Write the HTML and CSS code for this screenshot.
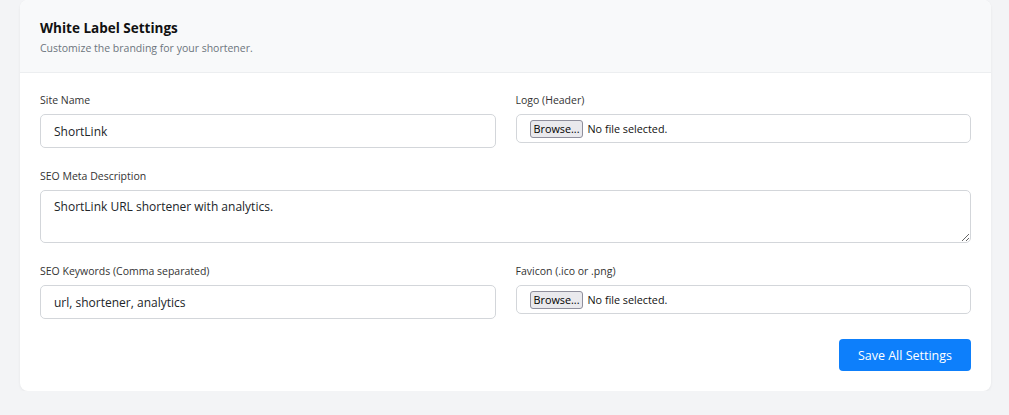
FILE: index.html
```html
<!DOCTYPE html>
<html lang="en">
<head>
    <meta charset="UTF-8">
    <meta name="viewport" content="width=device-width, initial-scale=1.0">
    <title>White Label Settings</title>
    <link rel="stylesheet" href="styles.css">
</head>
<body>
    <div class="page">
        <form class="card">
            <div class="card-header">
                <h2>White Label Settings</h2>
                <p>Customize the branding for your shortener.</p>
            </div>

            <div class="card-body">
                <div class="row">
                    <div class="field">
                        <label for="siteName">Site Name</label>
                        <input type="text" id="siteName" class="text-input" value="ShortLink">
                    </div>
                    <div class="field">
                        <label>Logo (Header)</label>
                        <div class="file-input">
                            <span class="browse">Browse...</span>
                            <span class="file-name">No file selected.</span>
                        </div>
                    </div>
                </div>

                <div class="field">
                    <label for="metaDesc">SEO Meta Description</label>
                    <textarea id="metaDesc" class="text-input" rows="2">ShortLink URL shortener with analytics.</textarea>
                </div>

                <div class="row">
                    <div class="field">
                        <label for="keywords">SEO Keywords (Comma separated)</label>
                        <input type="text" id="keywords" class="text-input" value="url, shortener, analytics">
                    </div>
                    <div class="field">
                        <label>Favicon (.ico or .png)</label>
                        <div class="file-input">
                            <span class="browse">Browse...</span>
                            <span class="file-name">No file selected.</span>
                        </div>
                    </div>
                </div>

                <div class="actions">
                    <button type="button" class="btn-primary">Save All Settings</button>
                </div>
            </div>
        </form>
    </div>
</body>
</html>
```

FILE: styles.css
```css
* {
    box-sizing: border-box;
    font-family: 'Open Sans', 'Noto Sans', sans-serif;
}

body {
    margin: 0;
    background-color: #f3f4f6;
    color: #212529;
}

.page {
    padding: 0 18px 0 20px;
}

.card {
    display: block;
    background-color: #fff;
    border-radius: 8px;
    box-shadow: 0 1px 3px rgba(0, 0, 0, 0.06);
    overflow: hidden;
}

.card-header {
    background-color: #f8f9fa;
    border-bottom: 1px solid #eceef0;
    padding: 18px 20px 16px;
}

.card-header h2 {
    margin: 0;
    font-size: 13.5px;
    line-height: 20px;
    font-weight: 700;
    color: #111;
}

.card-header p {
    margin: 2px 0 0;
    font-size: 10.5px;
    line-height: 16px;
    color: #6c757d;
}

.card-body {
    padding: 19px 20px 20px;
    display: flex;
    flex-direction: column;
    gap: 20px;
}

.row {
    display: grid;
    grid-template-columns: 1fr 1fr;
    gap: 20px;
    align-items: start;
}

.field {
    display: flex;
    flex-direction: column;
}

.field label {
    font-size: 10.5px;
    line-height: 16px;
    margin-bottom: 6px;
    color: #333;
}

.text-input {
    border: 1px solid #d3d6da;
    border-radius: 5px;
    padding: 0 13px;
    height: 34px;
    font-size: 12px;
    color: #212529;
    background: #fff;
    outline: none;
}

textarea.text-input {
    height: 53px;
    padding: 7px 13px;
    line-height: 18px;
    resize: vertical;
}

.file-input {
    display: flex;
    align-items: center;
    gap: 4px;
    height: 29px;
    border: 1px solid #d3d6da;
    border-radius: 5px;
    padding: 0 13px;
    font-size: 10.8px;
}

.browse {
    border: 1px solid #8f8f9d;
    border-radius: 3px;
    background-color: #e9e9ed;
    padding: 1px 3px;
    line-height: 14px;
    color: #000;
}

.file-name {
    color: #111;
}

.actions {
    display: flex;
    justify-content: flex-end;
}

.btn-primary {
    background-color: #0d7ffb;
    color: #fff;
    border: none;
    border-radius: 4px;
    height: 32px;
    padding: 0 19px;
    font-size: 12.5px;
}
```
